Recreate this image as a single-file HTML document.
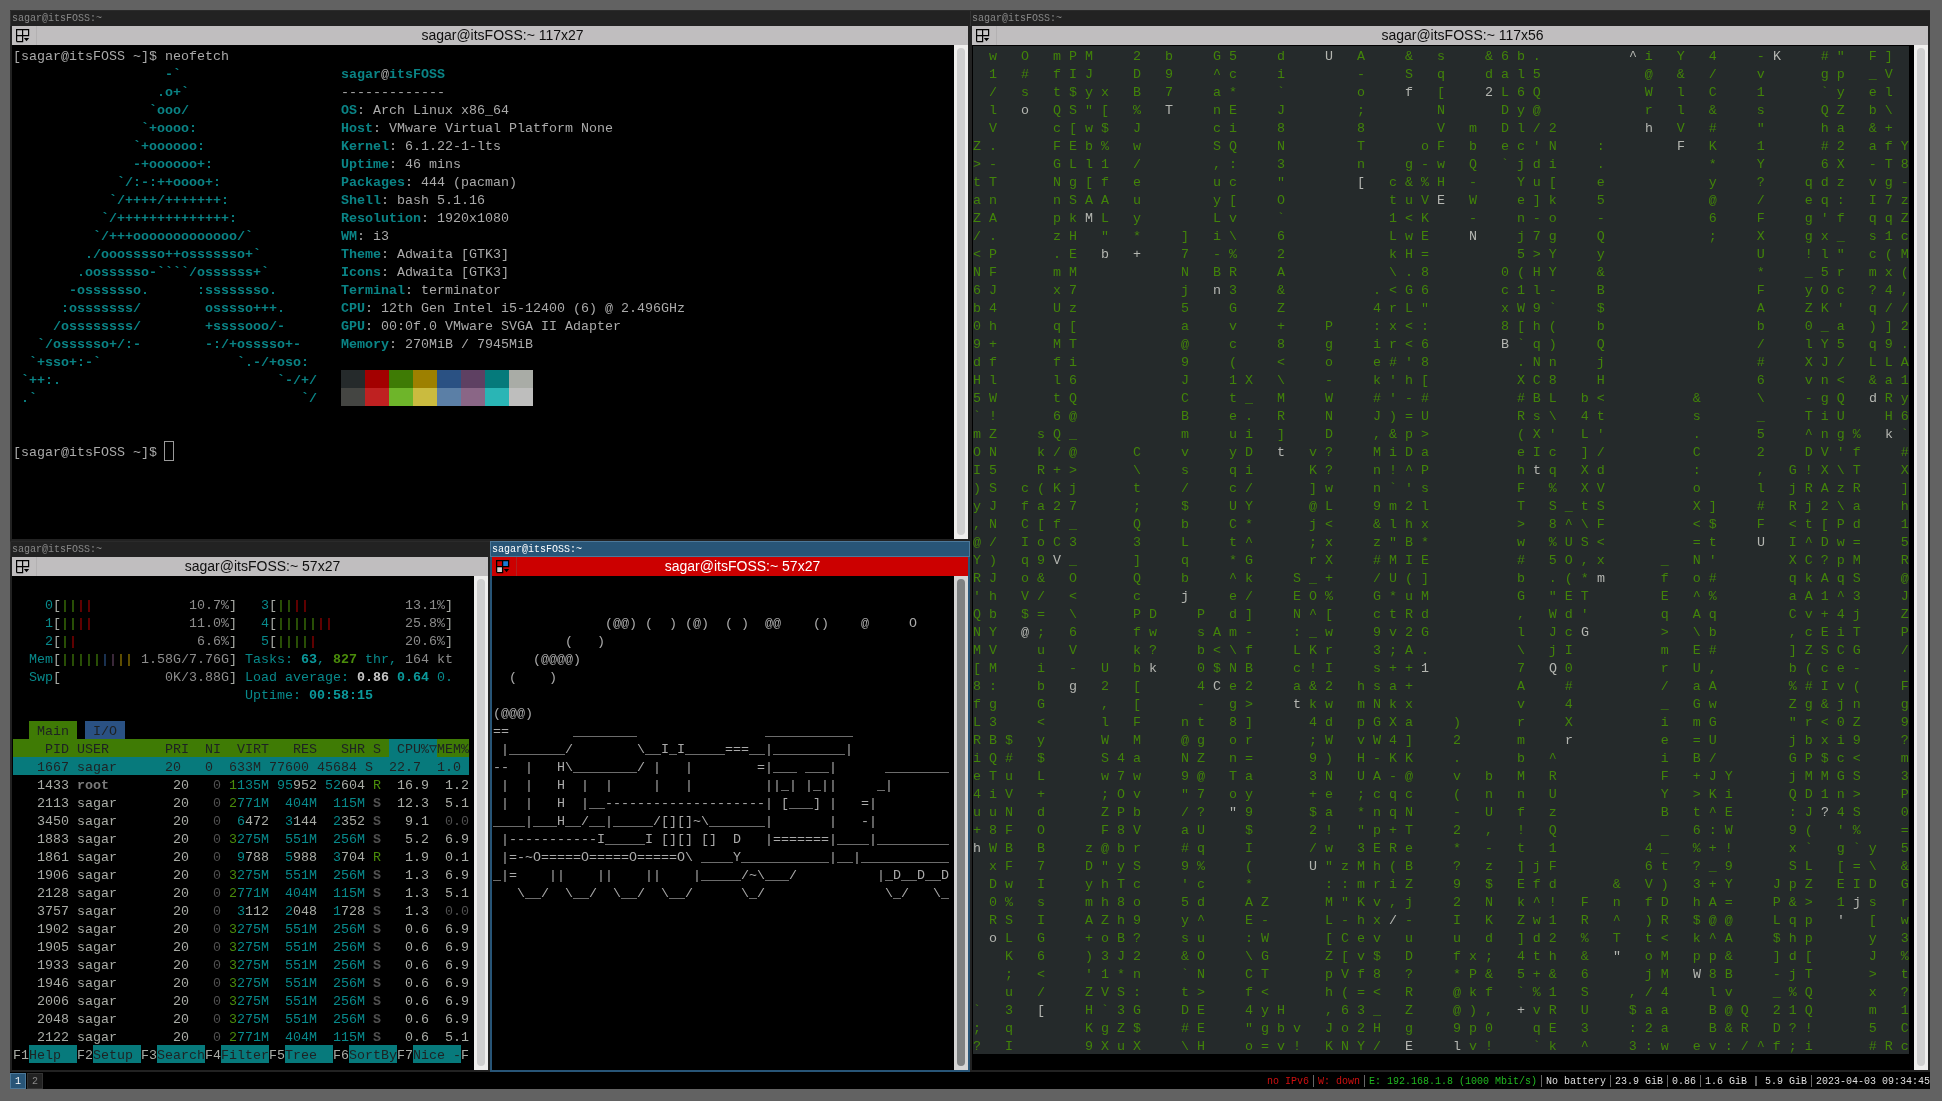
<!DOCTYPE html><html><head><meta charset="utf-8"><style>
*{margin:0;padding:0}
html,body{width:1942px;height:1101px;overflow:hidden;background:#626262}
body>div,body>svg{position:absolute}
div{position:absolute}
.t,.i3t,.tt{will-change:transform}
.t span{position:absolute;white-space:pre;font-family:"Liberation Mono",monospace;font-size:13.333px;line-height:18px;height:18px}
.i3t{position:absolute;white-space:pre;font-family:"Liberation Mono",monospace;font-size:10px;line-height:16px;height:16px;margin-top:1px}
.tt{position:absolute;white-space:pre;font-family:"Liberation Sans",sans-serif;font-size:14px;line-height:19px;height:19px;text-align:center}
</style></head><body>
<div style="left:0;top:0;width:1942px;height:1101px;background:#626262"></div>
<div style="left:10px;top:10px;width:960px;height:16px;background:#222222;box-shadow:inset 0 1px 0 #2a2a2a, inset 1px 0 0 #333333;"></div>
<div class="i3t" style="left:12px;top:10px;color:#888888">sagar@itsFOSS:~</div>
<div style="left:10px;top:26px;width:2px;height:515px;background:#222222;"></div>
<div style="left:968px;top:26px;width:2px;height:515px;background:#222222;"></div>
<div style="left:10px;top:539px;width:960px;height:2px;background:#222222;"></div>
<div style="left:12px;top:26px;width:956px;height:19px;background:#c0bebf;"></div>
<div style="left:36px;top:26px;width:1px;height:19px;background:#b3b1b2;"></div>
<svg style="position:absolute;left:16px;top:29px" width="14" height="14" viewBox="0 0 14 14"><path d="M0.6 0.6H6.6V6.6H0.6Z" fill="#c7c5c5"/><path d="M6.6 0.6H12.6V6.6H6.6Z" fill="#c7c5c5"/><path d="M0.6 6.6H6.6V12.6H0.6Z" fill="#c7c5c5"/><path d="M0.6 12.6V0.6H12.6V6.6H0.6M6.6 0.6V12.6H0.6" fill="none" stroke="#000" stroke-width="1.2"/><path d="M7.9 9H13.1L10.5 12.2Z" fill="#000"/></svg>
<div class="tt" style="left:37px;top:26px;width:931px;color:#0e0e0e">sagar@itsFOSS:~ 117x27</div>
<div style="left:12px;top:45px;width:942px;height:494px;background:#000000;"></div>
<div style="left:954px;top:45px;width:14px;height:494px;background:#efeeed;"></div>
<div style="left:957px;top:48px;width:8px;height:487px;background:#cfcfcf;border-radius:4px;"></div>
<div style="left:970px;top:10px;width:960px;height:16px;background:#222222;box-shadow:inset 0 1px 0 #2a2a2a, inset 1px 0 0 #333333;"></div>
<div class="i3t" style="left:972px;top:10px;color:#888888">sagar@itsFOSS:~</div>
<div style="left:970px;top:26px;width:2px;height:1046px;background:#222222;"></div>
<div style="left:1928px;top:26px;width:2px;height:1046px;background:#222222;"></div>
<div style="left:970px;top:1070px;width:960px;height:2px;background:#222222;"></div>
<div style="left:972px;top:26px;width:956px;height:19px;background:#c0bebf;"></div>
<div style="left:996px;top:26px;width:1px;height:19px;background:#b3b1b2;"></div>
<svg style="position:absolute;left:976px;top:29px" width="14" height="14" viewBox="0 0 14 14"><path d="M0.6 0.6H6.6V6.6H0.6Z" fill="#c7c5c5"/><path d="M6.6 0.6H12.6V6.6H6.6Z" fill="#c7c5c5"/><path d="M0.6 6.6H6.6V12.6H0.6Z" fill="#c7c5c5"/><path d="M0.6 12.6V0.6H12.6V6.6H0.6M6.6 0.6V12.6H0.6" fill="none" stroke="#000" stroke-width="1.2"/><path d="M7.9 9H13.1L10.5 12.2Z" fill="#000"/></svg>
<div class="tt" style="left:997px;top:26px;width:931px;color:#0e0e0e">sagar@itsFOSS:~ 117x56</div>
<div style="left:972px;top:45px;width:942px;height:1025px;background:#000000;"></div>
<div style="left:1914px;top:45px;width:14px;height:1025px;background:#efeeed;"></div>
<div style="left:1917px;top:48px;width:8px;height:1018px;background:#cfcfcf;border-radius:4px;"></div>
<div style="left:10px;top:541px;width:480px;height:16px;background:#222222;box-shadow:inset 0 1px 0 #2a2a2a, inset 1px 0 0 #333333;"></div>
<div class="i3t" style="left:12px;top:541px;color:#888888">sagar@itsFOSS:~</div>
<div style="left:10px;top:557px;width:2px;height:515px;background:#222222;"></div>
<div style="left:488px;top:557px;width:2px;height:515px;background:#222222;"></div>
<div style="left:10px;top:1070px;width:480px;height:2px;background:#222222;"></div>
<div style="left:12px;top:557px;width:476px;height:19px;background:#c0bebf;"></div>
<div style="left:36px;top:557px;width:1px;height:19px;background:#b3b1b2;"></div>
<svg style="position:absolute;left:16px;top:560px" width="14" height="14" viewBox="0 0 14 14"><path d="M0.6 0.6H6.6V6.6H0.6Z" fill="#c7c5c5"/><path d="M6.6 0.6H12.6V6.6H6.6Z" fill="#c7c5c5"/><path d="M0.6 6.6H6.6V12.6H0.6Z" fill="#c7c5c5"/><path d="M0.6 12.6V0.6H12.6V6.6H0.6M6.6 0.6V12.6H0.6" fill="none" stroke="#000" stroke-width="1.2"/><path d="M7.9 9H13.1L10.5 12.2Z" fill="#000"/></svg>
<div class="tt" style="left:37px;top:557px;width:451px;color:#0e0e0e">sagar@itsFOSS:~ 57x27</div>
<div style="left:12px;top:576px;width:462px;height:494px;background:#000000;"></div>
<div style="left:474px;top:576px;width:14px;height:494px;background:#efeeed;"></div>
<div style="left:477px;top:579px;width:8px;height:487px;background:#cfcfcf;border-radius:4px;"></div>
<div style="left:490px;top:541px;width:480px;height:16px;background:#285577;box-shadow:inset 0 0 0 1px #4c7899;"></div>
<div class="i3t" style="left:492px;top:541px;color:#ffffff">sagar@itsFOSS:~</div>
<div style="left:490px;top:557px;width:2px;height:515px;background:#285577;"></div>
<div style="left:968px;top:557px;width:2px;height:515px;background:#285577;"></div>
<div style="left:490px;top:1070px;width:480px;height:2px;background:#285577;"></div>
<div style="left:492px;top:557px;width:476px;height:19px;background:#cc0000;"></div>
<div style="left:516px;top:557px;width:1px;height:19px;background:#b02020;"></div>
<svg style="position:absolute;left:496px;top:560px" width="14" height="14" viewBox="0 0 14 14"><path d="M0.6 0.6H6.6V6.6H0.6Z" fill="#cc0000"/><path d="M6.6 0.6H12.6V6.6H6.6Z" fill="#1a7cd6"/><path d="M0.6 6.6H6.6V12.6H0.6Z" fill="#cfcfcf"/><path d="M0.6 12.6V0.6H12.6V6.6H0.6M6.6 0.6V12.6H0.6" fill="none" stroke="#000" stroke-width="1.3"/><path d="M7.9 9H13.1L10.5 12.2Z" fill="#000"/></svg>
<div class="tt" style="left:517px;top:557px;width:451px;color:#ffffff">sagar@itsFOSS:~ 57x27</div>
<div style="left:492px;top:576px;width:462px;height:494px;background:#000000;"></div>
<div style="left:954px;top:576px;width:14px;height:494px;background:#d5d5d5;"></div>
<div style="left:957px;top:579px;width:8px;height:487px;background:#7e8182;border-radius:4px;"></div>
<div class="t"><span style="left:13px;top:48px;color:#aaaaaa">[sagar@itsFOSS ~]$ neofetch</span><span style="left:165px;top:66px;color:#0a8486;font-weight:bold">-`</span><span style="left:341px;top:66px;color:#0a8486;font-weight:bold">sagar</span><span style="left:381px;top:66px;color:#aaaaaa">@</span><span style="left:389px;top:66px;color:#0a8486;font-weight:bold">itsFOSS</span><span style="left:157px;top:84px;color:#0a8486;font-weight:bold">.o+`</span><span style="left:341px;top:84px;color:#aaaaaa">-------------</span><span style="left:149px;top:102px;color:#0a8486;font-weight:bold">`ooo/</span><span style="left:341px;top:102px;color:#0a8486;font-weight:bold">OS</span><span style="left:357px;top:102px;color:#aaaaaa">: Arch Linux x86_64</span><span style="left:141px;top:120px;color:#0a8486;font-weight:bold">`+oooo:</span><span style="left:341px;top:120px;color:#0a8486;font-weight:bold">Host</span><span style="left:373px;top:120px;color:#aaaaaa">: VMware Virtual Platform None</span><span style="left:133px;top:138px;color:#0a8486;font-weight:bold">`+oooooo:</span><span style="left:341px;top:138px;color:#0a8486;font-weight:bold">Kernel</span><span style="left:389px;top:138px;color:#aaaaaa">: 6.1.22-1-lts</span><span style="left:133px;top:156px;color:#0a8486;font-weight:bold">-+oooooo+:</span><span style="left:341px;top:156px;color:#0a8486;font-weight:bold">Uptime</span><span style="left:389px;top:156px;color:#aaaaaa">: 46 mins</span><span style="left:117px;top:174px;color:#0a8486;font-weight:bold">`/:-:++oooo+:</span><span style="left:341px;top:174px;color:#0a8486;font-weight:bold">Packages</span><span style="left:405px;top:174px;color:#aaaaaa">: 444 (pacman)</span><span style="left:109px;top:192px;color:#0a8486;font-weight:bold">`/++++/+++++++:</span><span style="left:341px;top:192px;color:#0a8486;font-weight:bold">Shell</span><span style="left:381px;top:192px;color:#aaaaaa">: bash 5.1.16</span><span style="left:101px;top:210px;color:#0a8486;font-weight:bold">`/++++++++++++++:</span><span style="left:341px;top:210px;color:#0a8486;font-weight:bold">Resolution</span><span style="left:421px;top:210px;color:#aaaaaa">: 1920x1080</span><span style="left:93px;top:228px;color:#0a8486;font-weight:bold">`/+++ooooooooooooo/`</span><span style="left:341px;top:228px;color:#0a8486;font-weight:bold">WM</span><span style="left:357px;top:228px;color:#aaaaaa">: i3</span><span style="left:85px;top:246px;color:#0a8486;font-weight:bold">./ooosssso++osssssso+`</span><span style="left:341px;top:246px;color:#0a8486;font-weight:bold">Theme</span><span style="left:381px;top:246px;color:#aaaaaa">: Adwaita [GTK3]</span><span style="left:77px;top:264px;color:#0a8486;font-weight:bold">.oossssso-````/ossssss+`</span><span style="left:341px;top:264px;color:#0a8486;font-weight:bold">Icons</span><span style="left:381px;top:264px;color:#aaaaaa">: Adwaita [GTK3]</span><span style="left:69px;top:282px;color:#0a8486;font-weight:bold">-osssssso.      :ssssssso.</span><span style="left:341px;top:282px;color:#0a8486;font-weight:bold">Terminal</span><span style="left:405px;top:282px;color:#aaaaaa">: terminator</span><span style="left:61px;top:300px;color:#0a8486;font-weight:bold">:osssssss/        osssso+++.</span><span style="left:341px;top:300px;color:#0a8486;font-weight:bold">CPU</span><span style="left:365px;top:300px;color:#aaaaaa">: 12th Gen Intel i5-12400 (6) @ 2.496GHz</span><span style="left:53px;top:318px;color:#0a8486;font-weight:bold">/ossssssss/        +ssssooo/-</span><span style="left:341px;top:318px;color:#0a8486;font-weight:bold">GPU</span><span style="left:365px;top:318px;color:#aaaaaa">: 00:0f.0 VMware SVGA II Adapter</span><span style="left:37px;top:336px;color:#0a8486;font-weight:bold">`/ossssso+/:-        -:/+osssso+-</span><span style="left:341px;top:336px;color:#0a8486;font-weight:bold">Memory</span><span style="left:389px;top:336px;color:#aaaaaa">: 270MiB / 7945MiB</span><span style="left:29px;top:354px;color:#0a8486;font-weight:bold">`+sso+:-`                 `.-/+oso:</span><span style="left:21px;top:372px;color:#0a8486;font-weight:bold">`++:.                           `-/+/</span><span style="left:21px;top:390px;color:#0a8486;font-weight:bold">.`                                 `/</span><span style="left:13px;top:444px;color:#aaaaaa">[sagar@itsFOSS ~]$ </span></div>
<div style="left:341px;top:370px;width:24px;height:18px;background:#252a2b;"></div>
<div style="left:341px;top:388px;width:24px;height:18px;background:#444542;"></div>
<div style="left:365px;top:370px;width:24px;height:18px;background:#a30000;"></div>
<div style="left:365px;top:388px;width:24px;height:18px;background:#bf2121;"></div>
<div style="left:389px;top:370px;width:24px;height:18px;background:#3e7b05;"></div>
<div style="left:389px;top:388px;width:24px;height:18px;background:#6eb52a;"></div>
<div style="left:413px;top:370px;width:24px;height:18px;background:#9d8000;"></div>
<div style="left:413px;top:388px;width:24px;height:18px;background:#cabb3f;"></div>
<div style="left:437px;top:370px;width:24px;height:18px;background:#2a5183;"></div>
<div style="left:437px;top:388px;width:24px;height:18px;background:#5b7fa6;"></div>
<div style="left:461px;top:370px;width:24px;height:18px;background:#5e4062;"></div>
<div style="left:461px;top:388px;width:24px;height:18px;background:#8a6686;"></div>
<div style="left:485px;top:370px;width:24px;height:18px;background:#057a7b;"></div>
<div style="left:485px;top:388px;width:24px;height:18px;background:#2ab5b5;"></div>
<div style="left:509px;top:370px;width:24px;height:18px;background:#a9aca6;"></div>
<div style="left:509px;top:388px;width:24px;height:18px;background:#bebebd;"></div>
<div style="left:164px;top:441px;width:10px;height:20px;background:transparent;box-shadow:inset 0 0 0 1px #9a9a9a;"></div>
<div class="t"><span style="left:45px;top:597px;color:#088a8c">0</span><span style="left:53px;top:597px;color:#a9aca6">[</span><span style="left:61px;top:597px;color:#4a8c0a">||</span><span style="left:77px;top:597px;color:#b00000">||</span><span style="left:189px;top:597px;color:#8c8c8c">10.7%</span><span style="left:229px;top:597px;color:#a9aca6">]</span><span style="left:261px;top:597px;color:#088a8c">3</span><span style="left:269px;top:597px;color:#a9aca6">[</span><span style="left:277px;top:597px;color:#4a8c0a">||</span><span style="left:293px;top:597px;color:#b00000">||</span><span style="left:405px;top:597px;color:#8c8c8c">13.1%</span><span style="left:445px;top:597px;color:#a9aca6">]</span><span style="left:45px;top:615px;color:#088a8c">1</span><span style="left:53px;top:615px;color:#a9aca6">[</span><span style="left:61px;top:615px;color:#4a8c0a">||</span><span style="left:77px;top:615px;color:#b00000">||</span><span style="left:189px;top:615px;color:#8c8c8c">11.0%</span><span style="left:229px;top:615px;color:#a9aca6">]</span><span style="left:261px;top:615px;color:#088a8c">4</span><span style="left:269px;top:615px;color:#a9aca6">[</span><span style="left:277px;top:615px;color:#4a8c0a">|||||</span><span style="left:317px;top:615px;color:#b00000">||</span><span style="left:405px;top:615px;color:#8c8c8c">25.8%</span><span style="left:445px;top:615px;color:#a9aca6">]</span><span style="left:45px;top:633px;color:#088a8c">2</span><span style="left:53px;top:633px;color:#a9aca6">[</span><span style="left:61px;top:633px;color:#4a8c0a">|</span><span style="left:69px;top:633px;color:#b00000">|</span><span style="left:197px;top:633px;color:#8c8c8c">6.6%</span><span style="left:229px;top:633px;color:#a9aca6">]</span><span style="left:261px;top:633px;color:#088a8c">5</span><span style="left:269px;top:633px;color:#a9aca6">[</span><span style="left:277px;top:633px;color:#4a8c0a">||||</span><span style="left:309px;top:633px;color:#b00000">|</span><span style="left:405px;top:633px;color:#8c8c8c">20.6%</span><span style="left:445px;top:633px;color:#a9aca6">]</span><span style="left:29px;top:651px;color:#088a8c">Mem</span><span style="left:53px;top:651px;color:#a9aca6">[</span><span style="left:61px;top:651px;color:#4a8c0a">|||||</span><span style="left:101px;top:651px;color:#2f5a92">|</span><span style="left:109px;top:651px;color:#6a4868">|</span><span style="left:117px;top:651px;color:#a88a00">||</span><span style="left:141px;top:651px;color:#8c8c8c">1.58G/7.76G</span><span style="left:229px;top:651px;color:#a9aca6">]</span><span style="left:245px;top:651px;color:#088a8c">Tasks: </span><span style="left:301px;top:651px;color:#0b9a9c;font-weight:bold">63</span><span style="left:317px;top:651px;color:#088a8c">, </span><span style="left:333px;top:651px;color:#4a8c0a;font-weight:bold">827</span><span style="left:357px;top:651px;color:#088a8c"> thr, </span><span style="left:405px;top:651px;color:#8c8c8c">164 kt</span><span style="left:29px;top:669px;color:#088a8c">Swp</span><span style="left:53px;top:669px;color:#a9aca6">[</span><span style="left:165px;top:669px;color:#8c8c8c">0K/3.88G</span><span style="left:229px;top:669px;color:#a9aca6">]</span><span style="left:245px;top:669px;color:#088a8c">Load average: </span><span style="left:357px;top:669px;color:#c8c8c8;font-weight:bold">0.86</span><span style="left:397px;top:669px;color:#0b9a9c;font-weight:bold">0.64</span><span style="left:437px;top:669px;color:#088a8c">0.</span><span style="left:245px;top:687px;color:#088a8c">Uptime: </span><span style="left:309px;top:687px;color:#0b9a9c;font-weight:bold">00:58:15</span></div>
<div style="left:29px;top:721px;width:48px;height:18px;background:#3f7b05;"></div>
<div style="left:85px;top:721px;width:40px;height:18px;background:#2a5183;"></div>
<div style="left:13px;top:739px;width:376px;height:18px;background:#3f7b05;"></div>
<div style="left:389px;top:739px;width:48px;height:18px;background:#077a7c;"></div>
<div style="left:437px;top:739px;width:32px;height:18px;background:#3f7b05;"></div>
<div style="left:13px;top:757px;width:456px;height:18px;background:#077a7c;"></div>
<div style="left:29px;top:1045px;width:48px;height:18px;background:#077a7c;"></div>
<div style="left:93px;top:1045px;width:48px;height:18px;background:#077a7c;"></div>
<div style="left:157px;top:1045px;width:48px;height:18px;background:#077a7c;"></div>
<div style="left:221px;top:1045px;width:48px;height:18px;background:#077a7c;"></div>
<div style="left:285px;top:1045px;width:48px;height:18px;background:#077a7c;"></div>
<div style="left:349px;top:1045px;width:48px;height:18px;background:#077a7c;"></div>
<div style="left:413px;top:1045px;width:48px;height:18px;background:#077a7c;"></div>
<div class="t"><span style="left:37px;top:723px;color:#1e2223">Main</span><span style="left:93px;top:723px;color:#1e2223">I/O</span><span style="left:13px;top:741px;color:#1e2223">    PID USER       PRI  NI  VIRT   RES   SHR S  CPU%▽MEM%</span><span style="left:13px;top:759px;color:#1e2223">   1667 sagar      20   0  633M 77600 45684 S  22.7  1.0</span><span style="left:37px;top:777px;color:#a9aca6">1433</span><span style="left:77px;top:777px;color:#7a7a7a;font-weight:bold">root</span><span style="left:173px;top:777px;color:#a9aca6">20</span><span style="left:213px;top:777px;color:#505050">0</span><span style="left:229px;top:777px;color:#4a8c0a">1</span><span style="left:237px;top:777px;color:#088a8c">135M</span><span style="left:277px;top:777px;color:#088a8c">95</span><span style="left:293px;top:777px;color:#a9aca6">952</span><span style="left:325px;top:777px;color:#088a8c">52</span><span style="left:341px;top:777px;color:#a9aca6">604</span><span style="left:373px;top:777px;color:#4a8c0a">R</span><span style="left:397px;top:777px;color:#a9aca6">16.9</span><span style="left:445px;top:777px;color:#a9aca6">1.2</span><span style="left:37px;top:795px;color:#a9aca6">2113</span><span style="left:77px;top:795px;color:#a9aca6">sagar</span><span style="left:173px;top:795px;color:#a9aca6">20</span><span style="left:213px;top:795px;color:#505050">0</span><span style="left:229px;top:795px;color:#4a8c0a">2</span><span style="left:237px;top:795px;color:#088a8c">771M</span><span style="left:285px;top:795px;color:#088a8c">404M</span><span style="left:333px;top:795px;color:#088a8c">115M</span><span style="left:373px;top:795px;color:#505050;font-weight:bold">S</span><span style="left:397px;top:795px;color:#a9aca6">12.3</span><span style="left:445px;top:795px;color:#a9aca6">5.1</span><span style="left:37px;top:813px;color:#a9aca6">3450</span><span style="left:77px;top:813px;color:#a9aca6">sagar</span><span style="left:173px;top:813px;color:#a9aca6">20</span><span style="left:213px;top:813px;color:#505050">0</span><span style="left:237px;top:813px;color:#088a8c">6</span><span style="left:245px;top:813px;color:#a9aca6">472</span><span style="left:285px;top:813px;color:#088a8c">3</span><span style="left:293px;top:813px;color:#a9aca6">144</span><span style="left:333px;top:813px;color:#088a8c">2</span><span style="left:341px;top:813px;color:#a9aca6">352</span><span style="left:373px;top:813px;color:#505050;font-weight:bold">S</span><span style="left:405px;top:813px;color:#a9aca6">9.1</span><span style="left:445px;top:813px;color:#505050">0.0</span><span style="left:37px;top:831px;color:#a9aca6">1883</span><span style="left:77px;top:831px;color:#a9aca6">sagar</span><span style="left:173px;top:831px;color:#a9aca6">20</span><span style="left:213px;top:831px;color:#505050">0</span><span style="left:229px;top:831px;color:#4a8c0a">3</span><span style="left:237px;top:831px;color:#088a8c">275M</span><span style="left:285px;top:831px;color:#088a8c">551M</span><span style="left:333px;top:831px;color:#088a8c">256M</span><span style="left:373px;top:831px;color:#505050;font-weight:bold">S</span><span style="left:405px;top:831px;color:#a9aca6">5.2</span><span style="left:445px;top:831px;color:#a9aca6">6.9</span><span style="left:37px;top:849px;color:#a9aca6">1861</span><span style="left:77px;top:849px;color:#a9aca6">sagar</span><span style="left:173px;top:849px;color:#a9aca6">20</span><span style="left:213px;top:849px;color:#505050">0</span><span style="left:237px;top:849px;color:#088a8c">9</span><span style="left:245px;top:849px;color:#a9aca6">788</span><span style="left:285px;top:849px;color:#088a8c">5</span><span style="left:293px;top:849px;color:#a9aca6">988</span><span style="left:333px;top:849px;color:#088a8c">3</span><span style="left:341px;top:849px;color:#a9aca6">704</span><span style="left:373px;top:849px;color:#4a8c0a">R</span><span style="left:405px;top:849px;color:#a9aca6">1.9</span><span style="left:445px;top:849px;color:#a9aca6">0.1</span><span style="left:37px;top:867px;color:#a9aca6">1906</span><span style="left:77px;top:867px;color:#a9aca6">sagar</span><span style="left:173px;top:867px;color:#a9aca6">20</span><span style="left:213px;top:867px;color:#505050">0</span><span style="left:229px;top:867px;color:#4a8c0a">3</span><span style="left:237px;top:867px;color:#088a8c">275M</span><span style="left:285px;top:867px;color:#088a8c">551M</span><span style="left:333px;top:867px;color:#088a8c">256M</span><span style="left:373px;top:867px;color:#505050;font-weight:bold">S</span><span style="left:405px;top:867px;color:#a9aca6">1.3</span><span style="left:445px;top:867px;color:#a9aca6">6.9</span><span style="left:37px;top:885px;color:#a9aca6">2128</span><span style="left:77px;top:885px;color:#a9aca6">sagar</span><span style="left:173px;top:885px;color:#a9aca6">20</span><span style="left:213px;top:885px;color:#505050">0</span><span style="left:229px;top:885px;color:#4a8c0a">2</span><span style="left:237px;top:885px;color:#088a8c">771M</span><span style="left:285px;top:885px;color:#088a8c">404M</span><span style="left:333px;top:885px;color:#088a8c">115M</span><span style="left:373px;top:885px;color:#505050;font-weight:bold">S</span><span style="left:405px;top:885px;color:#a9aca6">1.3</span><span style="left:445px;top:885px;color:#a9aca6">5.1</span><span style="left:37px;top:903px;color:#a9aca6">3757</span><span style="left:77px;top:903px;color:#a9aca6">sagar</span><span style="left:173px;top:903px;color:#a9aca6">20</span><span style="left:213px;top:903px;color:#505050">0</span><span style="left:237px;top:903px;color:#088a8c">3</span><span style="left:245px;top:903px;color:#a9aca6">112</span><span style="left:285px;top:903px;color:#088a8c">2</span><span style="left:293px;top:903px;color:#a9aca6">048</span><span style="left:333px;top:903px;color:#088a8c">1</span><span style="left:341px;top:903px;color:#a9aca6">728</span><span style="left:373px;top:903px;color:#505050;font-weight:bold">S</span><span style="left:405px;top:903px;color:#a9aca6">1.3</span><span style="left:445px;top:903px;color:#505050">0.0</span><span style="left:37px;top:921px;color:#a9aca6">1902</span><span style="left:77px;top:921px;color:#a9aca6">sagar</span><span style="left:173px;top:921px;color:#a9aca6">20</span><span style="left:213px;top:921px;color:#505050">0</span><span style="left:229px;top:921px;color:#4a8c0a">3</span><span style="left:237px;top:921px;color:#088a8c">275M</span><span style="left:285px;top:921px;color:#088a8c">551M</span><span style="left:333px;top:921px;color:#088a8c">256M</span><span style="left:373px;top:921px;color:#505050;font-weight:bold">S</span><span style="left:405px;top:921px;color:#a9aca6">0.6</span><span style="left:445px;top:921px;color:#a9aca6">6.9</span><span style="left:37px;top:939px;color:#a9aca6">1905</span><span style="left:77px;top:939px;color:#a9aca6">sagar</span><span style="left:173px;top:939px;color:#a9aca6">20</span><span style="left:213px;top:939px;color:#505050">0</span><span style="left:229px;top:939px;color:#4a8c0a">3</span><span style="left:237px;top:939px;color:#088a8c">275M</span><span style="left:285px;top:939px;color:#088a8c">551M</span><span style="left:333px;top:939px;color:#088a8c">256M</span><span style="left:373px;top:939px;color:#505050;font-weight:bold">S</span><span style="left:405px;top:939px;color:#a9aca6">0.6</span><span style="left:445px;top:939px;color:#a9aca6">6.9</span><span style="left:37px;top:957px;color:#a9aca6">1933</span><span style="left:77px;top:957px;color:#a9aca6">sagar</span><span style="left:173px;top:957px;color:#a9aca6">20</span><span style="left:213px;top:957px;color:#505050">0</span><span style="left:229px;top:957px;color:#4a8c0a">3</span><span style="left:237px;top:957px;color:#088a8c">275M</span><span style="left:285px;top:957px;color:#088a8c">551M</span><span style="left:333px;top:957px;color:#088a8c">256M</span><span style="left:373px;top:957px;color:#505050;font-weight:bold">S</span><span style="left:405px;top:957px;color:#a9aca6">0.6</span><span style="left:445px;top:957px;color:#a9aca6">6.9</span><span style="left:37px;top:975px;color:#a9aca6">1946</span><span style="left:77px;top:975px;color:#a9aca6">sagar</span><span style="left:173px;top:975px;color:#a9aca6">20</span><span style="left:213px;top:975px;color:#505050">0</span><span style="left:229px;top:975px;color:#4a8c0a">3</span><span style="left:237px;top:975px;color:#088a8c">275M</span><span style="left:285px;top:975px;color:#088a8c">551M</span><span style="left:333px;top:975px;color:#088a8c">256M</span><span style="left:373px;top:975px;color:#505050;font-weight:bold">S</span><span style="left:405px;top:975px;color:#a9aca6">0.6</span><span style="left:445px;top:975px;color:#a9aca6">6.9</span><span style="left:37px;top:993px;color:#a9aca6">2006</span><span style="left:77px;top:993px;color:#a9aca6">sagar</span><span style="left:173px;top:993px;color:#a9aca6">20</span><span style="left:213px;top:993px;color:#505050">0</span><span style="left:229px;top:993px;color:#4a8c0a">3</span><span style="left:237px;top:993px;color:#088a8c">275M</span><span style="left:285px;top:993px;color:#088a8c">551M</span><span style="left:333px;top:993px;color:#088a8c">256M</span><span style="left:373px;top:993px;color:#505050;font-weight:bold">S</span><span style="left:405px;top:993px;color:#a9aca6">0.6</span><span style="left:445px;top:993px;color:#a9aca6">6.9</span><span style="left:37px;top:1011px;color:#a9aca6">2048</span><span style="left:77px;top:1011px;color:#a9aca6">sagar</span><span style="left:173px;top:1011px;color:#a9aca6">20</span><span style="left:213px;top:1011px;color:#505050">0</span><span style="left:229px;top:1011px;color:#4a8c0a">3</span><span style="left:237px;top:1011px;color:#088a8c">275M</span><span style="left:285px;top:1011px;color:#088a8c">551M</span><span style="left:333px;top:1011px;color:#088a8c">256M</span><span style="left:373px;top:1011px;color:#505050;font-weight:bold">S</span><span style="left:405px;top:1011px;color:#a9aca6">0.6</span><span style="left:445px;top:1011px;color:#a9aca6">6.9</span><span style="left:37px;top:1029px;color:#a9aca6">2122</span><span style="left:77px;top:1029px;color:#a9aca6">sagar</span><span style="left:173px;top:1029px;color:#a9aca6">20</span><span style="left:213px;top:1029px;color:#505050">0</span><span style="left:229px;top:1029px;color:#4a8c0a">2</span><span style="left:237px;top:1029px;color:#088a8c">771M</span><span style="left:285px;top:1029px;color:#088a8c">404M</span><span style="left:333px;top:1029px;color:#088a8c">115M</span><span style="left:373px;top:1029px;color:#505050;font-weight:bold">S</span><span style="left:405px;top:1029px;color:#a9aca6">0.6</span><span style="left:445px;top:1029px;color:#a9aca6">5.1</span><span style="left:13px;top:1047px;color:#a9aca6">F1</span><span style="left:29px;top:1047px;color:#1e2223">Help  </span><span style="left:77px;top:1047px;color:#a9aca6">F2</span><span style="left:93px;top:1047px;color:#1e2223">Setup </span><span style="left:141px;top:1047px;color:#a9aca6">F3</span><span style="left:157px;top:1047px;color:#1e2223">Search</span><span style="left:205px;top:1047px;color:#a9aca6">F4</span><span style="left:221px;top:1047px;color:#1e2223">Filter</span><span style="left:269px;top:1047px;color:#a9aca6">F5</span><span style="left:285px;top:1047px;color:#1e2223">Tree  </span><span style="left:333px;top:1047px;color:#a9aca6">F6</span><span style="left:349px;top:1047px;color:#1e2223">SortBy</span><span style="left:397px;top:1047px;color:#a9aca6">F7</span><span style="left:413px;top:1047px;color:#1e2223">Nice -</span><span style="left:461px;top:1047px;color:#a9aca6">F</span></div>
<div class="t"><span style="left:605px;top:615px;color:#aaaaaa">(@@)</span><span style="left:645px;top:615px;color:#aaaaaa">(  )</span><span style="left:685px;top:615px;color:#aaaaaa">(@)</span><span style="left:725px;top:615px;color:#aaaaaa">( )</span><span style="left:765px;top:615px;color:#aaaaaa">@@</span><span style="left:813px;top:615px;color:#aaaaaa">()</span><span style="left:861px;top:615px;color:#aaaaaa">@</span><span style="left:909px;top:615px;color:#aaaaaa">O</span><span style="left:565px;top:633px;color:#aaaaaa">(   )</span><span style="left:533px;top:651px;color:#aaaaaa">(@@@@)</span><span style="left:509px;top:669px;color:#aaaaaa">(    )</span><span style="left:493px;top:705px;color:#aaaaaa">(@@@)</span><span style="left:493px;top:723px;color:#aaaaaa">==        ________                ___________</span><span style="left:493px;top:741px;color:#aaaaaa"> |_______/        \__I_I_____===__|_________|</span><span style="left:493px;top:759px;color:#aaaaaa">--  |   H\________/ |   |        =|___ ___|      ________</span><span style="left:493px;top:777px;color:#aaaaaa"> |  |   H  |  |     |   |         ||_| |_||     _|</span><span style="left:493px;top:795px;color:#aaaaaa"> |  |   H  |__--------------------| [___] |   =|</span><span style="left:493px;top:813px;color:#aaaaaa">____|___H__/__|_____/[][]~\_______|       |   -|</span><span style="left:493px;top:831px;color:#aaaaaa"> |-----------I_____I [][] []  D   |=======|____|_________</span><span style="left:493px;top:849px;color:#aaaaaa"> |=-~O=====O=====O=====O\ ____Y___________|__|___________</span><span style="left:493px;top:867px;color:#aaaaaa">_|=    ||    ||    ||    |_____/~\___/          |_D__D__D</span><span style="left:493px;top:885px;color:#aaaaaa">   \__/  \__/  \__/  \__/      \_/               \_/   \_</span></div>
<div style="left:10px;top:1072px;width:1920px;height:17px;background:#000000;"></div>
<div style="left:10px;top:1073px;width:16px;height:16px;background:#285577;box-shadow:inset 0 0 0 1px #4c7899;"></div>
<div style="left:27px;top:1073px;width:16px;height:16px;background:#222222;box-shadow:inset 0 0 0 1px #333333;"></div>
<div class="i3t" style="left:15px;top:1073px;color:#ffffff">1</div>
<div class="i3t" style="left:32px;top:1073px;color:#888888">2</div>
<div class="i3t" style="left:1267px;top:1073px;color:#d01010">no IPv6</div>
<div class="i3t" style="left:1318px;top:1073px;color:#d01010">W: down</div>
<div class="i3t" style="left:1369px;top:1073px;color:#20b820">E: 192.168.1.8 (1000 Mbit/s)</div>
<div class="i3t" style="left:1546px;top:1073px;color:#dddddd">No battery</div>
<div class="i3t" style="left:1615px;top:1073px;color:#dddddd">23.9 GiB</div>
<div class="i3t" style="left:1672px;top:1073px;color:#dddddd">0.86</div>
<div class="i3t" style="left:1705px;top:1073px;color:#dddddd">1.6 GiB | 5.9 GiB</div>
<div class="i3t" style="left:1816px;top:1073px;color:#dddddd">2023-04-03 09:34:45</div>
<div style="left:1313px;top:1075px;width:1px;height:12px;background:#666666;"></div>
<div style="left:1364px;top:1075px;width:1px;height:12px;background:#666666;"></div>
<div style="left:1541px;top:1075px;width:1px;height:12px;background:#666666;"></div>
<div style="left:1610px;top:1075px;width:1px;height:12px;background:#666666;"></div>
<div style="left:1667px;top:1075px;width:1px;height:12px;background:#666666;"></div>
<div style="left:1700px;top:1075px;width:1px;height:12px;background:#666666;"></div>
<div style="left:1811px;top:1075px;width:1px;height:12px;background:#666666;"></div>
<div style="left:973px;top:46px;width:936px;height:1008px;background:#252a2b;"></div>
<div class="t"><span style="left:973px;top:48px;color:#428409">  w   O   m P M     2   b     G 5     d         A     &amp;   s     &amp; 6 b .             i   Y   4     -       # "   F ]</span><span style="left:1325px;top:48px;color:#b4b6b1">U</span><span style="left:1629px;top:48px;color:#b4b6b1">^</span><span style="left:1773px;top:48px;color:#b4b6b1">K</span><span style="left:973px;top:66px;color:#428409">  1   #   f I J     D   9     ^ c     i         -     S   q     d a l 5             @   &amp;   /     v       g p   _ V</span><span style="left:973px;top:84px;color:#428409">  /   s   t $ y x   B   7     a *     `         o         [       L 6 Q             W   l   C     1       ` y   e l</span><span style="left:1405px;top:84px;color:#b4b6b1">f</span><span style="left:1485px;top:84px;color:#b4b6b1">2</span><span style="left:973px;top:102px;color:#428409">  l       Q S " [   %         n E     J         ;         N       D y @             r   l   &amp;     s       Q Z   b \</span><span style="left:1021px;top:102px;color:#b4b6b1">o</span><span style="left:1165px;top:102px;color:#b4b6b1">T</span><span style="left:973px;top:120px;color:#428409">  V       c [ w $   J         c i     8         8         V   m   D l / 2               V   #     "       h a   &amp; +</span><span style="left:1645px;top:120px;color:#b4b6b1">h</span><span style="left:973px;top:138px;color:#428409">Z .       F E b %   w         S Q     N         T       o F   b   e c ' N     :             K     1       # 2   a f Y</span><span style="left:1677px;top:138px;color:#b4b6b1">F</span><span style="left:973px;top:156px;color:#428409">&gt; -       G L l 1   /         , :     3         n     g - w   Q   ` j d i     .             *     Y       6 X   - T 8</span><span style="left:973px;top:174px;color:#428409">t T       N g [ f   e         u c     "             c &amp; % H   -     Y u [     e             y     ?     q d z   v g -</span><span style="left:1357px;top:174px;color:#b4b6b1">[</span><span style="left:973px;top:192px;color:#428409">a n       n S A A   u         y [     O             t u V     W     e ] k     5             @     /     e q :   I 7 z</span><span style="left:1437px;top:192px;color:#b4b6b1">E</span><span style="left:973px;top:210px;color:#428409">Z A       p k   L   y         L v     `             1 &lt; K     -     n - o     -             6     F     g ' f   q q Z</span><span style="left:1085px;top:210px;color:#b4b6b1">M</span><span style="left:973px;top:228px;color:#428409">/ .       z H   "   *     ]   i \     6             L w E           j 7 g     Q             ;     X     g x _   s 1 c</span><span style="left:1469px;top:228px;color:#b4b6b1">N</span><span style="left:973px;top:246px;color:#428409">&lt; P       . E             7   - %     2             k H =           5 &gt; Y     y                   U     ! l "   c ( M</span><span style="left:1101px;top:246px;color:#b4b6b1">b</span><span style="left:1133px;top:246px;color:#b4b6b1">+</span><span style="left:973px;top:264px;color:#428409">N F       m M             N   B R     A             \ . 8         0 ( H Y     &amp;                   *     _ 5 r   m x (</span><span style="left:973px;top:282px;color:#428409">6 J       x 7             j     3     &amp;           . &lt; G 6         c 1 l -     B                   F     y O c   ? 4 ,</span><span style="left:1213px;top:282px;color:#b4b6b1">n</span><span style="left:973px;top:300px;color:#428409">b 4       U z             5     G     Z           4 r L "         x W 9 `     $                   A     Z K '   q / /</span><span style="left:973px;top:318px;color:#428409">0 h       q [             a     v     +     P     : x &lt; :         8 [ h (     b                   b     0 _ a   ) ] 2</span><span style="left:973px;top:336px;color:#428409">9 +       M T             @     c     8     g     i r &lt; 6           ` q )     Q                   /     l Y 5   q 9 .</span><span style="left:1501px;top:336px;color:#b4b6b1">B</span><span style="left:973px;top:354px;color:#428409">d f       f i             9     (     &lt;     o     e # ' 8           . N n     j                   #     X J /   L L A</span><span style="left:973px;top:372px;color:#428409">H l       l 6             J     1 X   \     -     k ' h [           X C 8     H                   6     v n &lt;   &amp; a 1</span><span style="left:973px;top:390px;color:#428409">5 W       t Q             C     t _   M     W     # ' - #           # B L   b &lt;           &amp;       \     - g Q     R y</span><span style="left:1869px;top:390px;color:#b4b6b1">d</span><span style="left:973px;top:408px;color:#428409">` !       6 @             B     e .   R     N     J ) = U           R s \   4 t           s       _     T i U     H 6</span><span style="left:973px;top:426px;color:#428409">m Z     s Q _             m     u i   ]     D     , &amp; p &gt;           ( X '   L '           .       5     ^ n g %     `</span><span style="left:1885px;top:426px;color:#b4b6b1">k</span><span style="left:973px;top:444px;color:#428409">O N     k / @       C     v     y D       v ?     M i D a           e I c   ] /           C       2     D V ' f     #</span><span style="left:1277px;top:444px;color:#b4b6b1">t</span><span style="left:973px;top:462px;color:#428409">I 5     R + &gt;       \     s     q i       K ?     n ! ^ P           h   q   X d           :       ,   G ! X \ T     X</span><span style="left:1533px;top:462px;color:#b4b6b1">t</span><span style="left:973px;top:480px;color:#428409">) S   c ( K j       t     /     c /       ] w     n ` ' s           F   %   X V           o       l   j R A z R     ]</span><span style="left:973px;top:498px;color:#428409">y J   f a 2 7       ;     $     U Y       @ L     9 m 2 l           T   S _ t S           X ]     #   R j 2 \ a     h</span><span style="left:973px;top:516px;color:#428409">, N   C [ f _       Q     b     C *       j &lt;     &amp; l h x           &gt;   8 ^ \ F           &lt; $     F   &lt; t [ P d     1</span><span style="left:973px;top:534px;color:#428409">@ /   I o C 3       3     L     t ^       ; x     z " B *           w   % U S &lt;           = t         I ^ D w =     5</span><span style="left:1757px;top:534px;color:#b4b6b1">U</span><span style="left:973px;top:552px;color:#428409">Y )   q 9   _       ]     q     * G       r X     # M I E           #   5 O , x       _   N '         X C ? p M     R</span><span style="left:1053px;top:552px;color:#b4b6b1">V</span><span style="left:973px;top:570px;color:#428409">R J   o &amp;   O       Q     b     ^ k     S _ +     / U ( ]           b   . ( *         f   o #         q k A q S     @</span><span style="left:1597px;top:570px;color:#b4b6b1">m</span><span style="left:973px;top:588px;color:#428409">' h   V /   &lt;       c           e /     E O %     G * u M           G   " E T         E   ^ %         a A 1 ^ 3     J</span><span style="left:1181px;top:588px;color:#b4b6b1">j</span><span style="left:973px;top:606px;color:#428409">Q b   $ =   \       P D     P   d ]     N ^ [     c t R d           ,   W d '         q   A q         C v + 4 j     Z</span><span style="left:973px;top:624px;color:#428409">N Y     ;   6       f w     s A m -     : _ w     9 v 2 G           l   J c           &gt;   \ b         , c E i T     P</span><span style="left:1021px;top:624px;color:#b4b6b1">@</span><span style="left:1581px;top:624px;color:#b4b6b1">G</span><span style="left:973px;top:642px;color:#428409">M V     u   V       k ?     b &lt; \ f     L K r     3 ; A .           \   j I           m   E #         ] Z S C G     /</span><span style="left:973px;top:660px;color:#428409">[ M     i   -   U   b       0 $ N B     c ! I     s + +             7     0           r   U ,         b ( c e -     .</span><span style="left:1149px;top:660px;color:#b4b6b1">k</span><span style="left:1421px;top:660px;color:#b4b6b1">1</span><span style="left:1549px;top:660px;color:#b4b6b1">Q</span><span style="left:973px;top:678px;color:#428409">8 :     b       2   [       4   e 2     a &amp; 2   h s a +             A     #           /   a A         % # I v (     F</span><span style="left:1069px;top:678px;color:#b4b6b1">g</span><span style="left:1213px;top:678px;color:#b4b6b1">C</span><span style="left:973px;top:696px;color:#428409">f g     G       ,   [       -   g &gt;       k w   m N k x             v     4           _   G w         Z g &amp; j n     g</span><span style="left:1293px;top:696px;color:#b4b6b1">t</span><span style="left:973px;top:714px;color:#428409">L 3     &lt;       l   F     n t   8 ]       4 d   p G X a     )       r     X           i   m G         " r &lt; 0 Z     9</span><span style="left:973px;top:732px;color:#428409">R B $   y       W   M     @ g   o r       ; W   v W 4 ]     2       m                 e   = U         j b x i 9     ?</span><span style="left:1565px;top:732px;color:#b4b6b1">r</span><span style="left:973px;top:750px;color:#428409">i Q #   $       S 4 a     N Z   n =       9 )   H - K K     .       b   ^             i   B /         G P $ c &lt;     m</span><span style="left:973px;top:768px;color:#428409">e T u   L       w 7 w     9 @   T a       3 N   U A - @     v   b   M   R             F   + J Y       j M M G S     3</span><span style="left:973px;top:786px;color:#428409">4 i V   +       ; O v     " 7   o y       + e   ; c q c     (   n   n   U             Y   &gt; K i       Q D 1 n &gt;     P</span><span style="left:973px;top:804px;color:#428409">u u N   d       Z P b     / ?     9       $ a   * n q N     -   U   f   z             B   t ^ E       : J   4 S     0</span><span style="left:1229px;top:804px;color:#b4b6b1">"</span><span style="left:1821px;top:804px;color:#b4b6b1">?</span><span style="left:973px;top:822px;color:#428409">+ 8 F   O       F 8 V     a U     $       2 !   " p + T     2   ,   !   Q             _   6 : W       9 (   ' %     =</span><span style="left:973px;top:840px;color:#428409">  W B   B     z @ b r     # q     I       / w   3 E R e     *   -   t   1           4 _   % + !       x `   g ` y   5</span><span style="left:973px;top:840px;color:#b4b6b1">h</span><span style="left:973px;top:858px;color:#428409">  x F   7     D " y S     9 %     (         " z M h ( B     ?   z   ] j F           6 t   ? _ 9       S L   [ = \   &amp;</span><span style="left:1309px;top:858px;color:#b4b6b1">U</span><span style="left:973px;top:876px;color:#428409">  D w   I     y h T c     ' c     *         : : m r i Z     9   $   E f d       &amp;   V )   3 + Y     J p Z   E I D   G</span><span style="left:973px;top:894px;color:#428409">  0 %   s     m h 8 o     5 d     A Z       M " K v , j     2   N   k ^ !   F   n   f D   h A =     P &amp; &gt;   1   s   r</span><span style="left:1853px;top:894px;color:#b4b6b1">j</span><span style="left:973px;top:912px;color:#428409">  R S   I     A Z h 9     y ^     E -       L - h x   -     I   K   Z w 1   R   ^   ) R   $ @ @     L q p       [   w</span><span style="left:1389px;top:912px;color:#b4b6b1">/</span><span style="left:1837px;top:912px;color:#b4b6b1">'</span><span style="left:973px;top:930px;color:#428409">    L   G     + o B ?     s u     : W       [ C e v   u     u   d   ] d 2   %   T   t &lt;   k ^ A     $ h p       y   3</span><span style="left:989px;top:930px;color:#b4b6b1">o</span><span style="left:973px;top:948px;color:#428409">    K   6     ) 3 J 2     &amp; O     \ G       Z [ v $   D     f x ;   4 t h   &amp;       o M   p p &amp;     ] d [       J   %</span><span style="left:1613px;top:948px;color:#b4b6b1">"</span><span style="left:973px;top:966px;color:#428409">    ;   &lt;     ' 1 * n     ` N     C T       p V f 8   ?     * P &amp;   5 + &amp;   6       j M     8 B     - j T       &gt;   t</span><span style="left:1693px;top:966px;color:#b4b6b1">W</span><span style="left:973px;top:984px;color:#428409">    u   /     Z V S :     t &gt;     f &lt;       h ( = &lt;   R     @ k f   ` % 1   S     , / 4     l v     _ % Q       x   ?</span><span style="left:973px;top:1002px;color:#428409">`   3         H ` 3 G     D E     4 y H     , 6 3 _   Z     @ ) ,     v R   U     $ a a     B @ Q   2 1 Q       m   1</span><span style="left:1037px;top:1002px;color:#b4b6b1">[</span><span style="left:1517px;top:1002px;color:#b4b6b1">+</span><span style="left:973px;top:1020px;color:#428409">;   q         K g Z $     # E     " g b v   J o 2 H   g     9 p 0     q E   3     : 2 a     B &amp; R   D ? !       5   C</span><span style="left:973px;top:1038px;color:#428409">?   I         9 X u X     \ H     o = v !   K N Y /           v !     ` k   ^     3 : w   e v : / ^ f ; i       # R c</span><span style="left:1405px;top:1038px;color:#b4b6b1">E</span><span style="left:1453px;top:1038px;color:#b4b6b1">l</span></div>
</body></html>
